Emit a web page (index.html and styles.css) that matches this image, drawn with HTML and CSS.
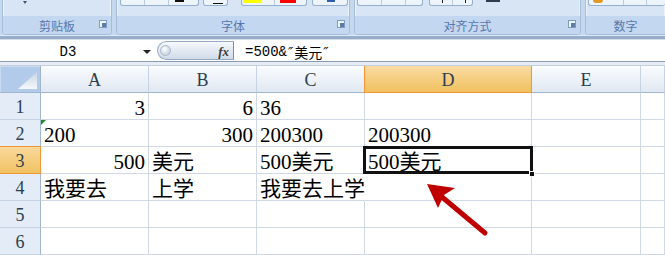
FILE: index.html
```html
<!DOCTYPE html>
<html lang="zh-CN">
<head>
  <meta charset="UTF-8" />
  <title>Excel - 连接符</title>
  <link rel="stylesheet" href="styles.css">
</head>
<body>
  <div class="ribbon">
    <div class="group g-clip">
      <div class="tools"><span class="paste-arrow"></span></div>
      <div class="label">剪贴板
        <svg class="launcher" width="8" height="8" viewBox="0 0 8 8"><rect x="0.5" y="0.5" width="7" height="7" fill="#eef4fb" stroke="#7f9cc3"/><rect x="3" y="3" width="4" height="4" fill="#5d7ba6"/></svg>
      </div>
    </div>
    <div class="group g-font">
      <div class="tools">
        <div class="btn b-bold"><span class="seg w23"></span><span class="seg w24"></span><span class="seg grow"><i class="mark m-dark"></i></span></div>
        <div class="btn b-line"><span class="seg grow"><i class="mark m-under"></i></span></div>
        <div class="btn b-color"><span class="seg w32"><i class="mark m-yellow"></i></span><span class="seg grow"><i class="mark m-red"></i></span></div>
        <div class="btn b-wen"><span class="seg grow"><i class="mark m-blue"></i></span></div>
      </div>
      <div class="label">字体
        <svg class="launcher" width="8" height="8" viewBox="0 0 8 8"><rect x="0.5" y="0.5" width="7" height="7" fill="#eef4fb" stroke="#7f9cc3"/><rect x="3" y="3" width="4" height="4" fill="#5d7ba6"/></svg>
      </div>
    </div>
    <div class="group g-align">
      <div class="tools">
        <div class="btn b-valign"><span class="seg w23"></span><span class="seg w24"></span><span class="seg grow"></span></div>
        <div class="btn b-indent"><span class="seg w22"><i class="mark m-tick"></i></span><span class="seg grow"><i class="mark m-tick"></i></span></div>
        <i class="wrap-mark"></i>
      </div>
      <div class="label">对齐方式
        <svg class="launcher" width="8" height="8" viewBox="0 0 8 8"><rect x="0.5" y="0.5" width="7" height="7" fill="#eef4fb" stroke="#7f9cc3"/><rect x="3" y="3" width="4" height="4" fill="#5d7ba6"/></svg>
      </div>
    </div>
    <div class="group g-num">
      <div class="tools">
        <div class="btn b-num"><span class="seg w34"><i class="mark m-orange"></i></span><span class="seg w23"></span><span class="seg grow"></span></div>
      </div>
      <div class="label">数字</div>
    </div>
  </div>
  <div class="ribbon-edge"></div>

  <div class="formula-bar">
    <div class="name-box"><span class="ref">D3</span><span class="drop"></span></div>
    <div class="fx-box"><span class="grip"></span><span class="fx">fx</span></div>
    <div class="formula">=500&amp;<span class="q">″</span>美元<span class="q">″</span></div>
  </div>
  <div class="sheet-gap"></div>

  <div class="sheet">
    <div class="corner"><span class="tri"></span></div>
    <div class="ch">A</div>
    <div class="ch">B</div>
    <div class="ch">C</div>
    <div class="ch sel">D</div>
    <div class="ch">E</div>
    <div class="ch"></div>

    <div class="rh">1</div>
    <div class="c r">3</div>
    <div class="c r">6</div>
    <div class="c">36</div>
    <div class="c"></div>
    <div class="c"></div>
    <div class="c"></div>

    <div class="rh">2</div>
    <div class="c flag">200</div>
    <div class="c r">300</div>
    <div class="c">200300</div>
    <div class="c">200300</div>
    <div class="c"></div>
    <div class="c"></div>

    <div class="rh sel">3</div>
    <div class="c r">500</div>
    <div class="c">美元</div>
    <div class="c">500美元</div>
    <div class="c active">500美元<span class="handle"></span></div>
    <div class="c"></div>
    <div class="c"></div>

    <div class="rh">4</div>
    <div class="c">我要去</div>
    <div class="c">上学</div>
    <div class="c spill">我要去上学</div>
    <div class="c"></div>
    <div class="c"></div>
    <div class="c"></div>

    <div class="rh">5</div>
    <div class="c"></div>
    <div class="c"></div>
    <div class="c"></div>
    <div class="c"></div>
    <div class="c"></div>
    <div class="c"></div>

    <div class="rh">6</div>
    <div class="c"></div>
    <div class="c"></div>
    <div class="c"></div>
    <div class="c"></div>
    <div class="c"></div>
    <div class="c"></div>
  </div>

  <!-- annotation arrow pointing at D3 -->
  <svg class="arrow" width="665" height="255" viewBox="0 0 665 255">
    <line x1="485" y1="233" x2="442" y2="197" stroke="#c00000" stroke-width="5" stroke-linecap="round"/>
    <polygon points="427,184 455,188 444,195 438,208" fill="#c00000"/>
  </svg>
</body>
</html>
```

FILE: styles.css
```css
* {
  box-sizing: border-box;
}

body {
  margin: 0;
  width: 665px;
  height: 255px;
  overflow: hidden;
  position: relative;
  background: #fff;
  font-family: "Liberation Serif", "Noto Sans CJK SC", serif;
}

/* ribbon */
.ribbon {
  display: flex;
  gap: 4px;
  height: 35px;
  padding-left: 2px;
  background: #c5d8ee;
}

.group {
  display: flex;
  flex-direction: column;
  height: 35px;
  border: 1px solid #a4bddb;
  border-top: none;
  border-radius: 0 0 4px 4px;
  background: #d8e5f4;
  overflow: hidden;
  box-shadow: inset 1px 0 0 #eaf2fb, inset -1px 0 0 #eaf2fb;
}

.g-clip { width: 110px; }
.g-font { width: 234px; }
.g-align { width: 227px; }
.g-num { flex: 1; border-right: none; border-radius: 0 0 0 4px; }

.tools {
  height: 17px;
  display: flex;
  align-items: flex-start;
}

.label {
  flex: 1;
  position: relative;
  display: flex;
  justify-content: center;
  align-items: center;
  padding-top: 1px;
  background: #c3d8f0;
  font: 12px "Noto Sans CJK SC", sans-serif;
  color: #5677ad;
}

.launcher {
  position: absolute;
  right: 4px;
  top: 4px;
}

.paste-arrow {
  margin: 1px 0 0 20px;
  border-left: 2.5px solid transparent;
  border-right: 2.5px solid transparent;
  border-top: 3px solid #3f5475;
}

.btn {
  display: flex;
  height: 6px;
  border: 1px solid #95afd1;
  border-top: none;
  border-radius: 0 0 3px 3px;
  background: #eef4fb;
  overflow: hidden;
}

.seg {
  display: flex;
  align-items: flex-start;
  height: 100%;
}

.seg + .seg { border-left: 1px solid #b9cce4; }
.seg.grow { flex: 1; }
.w22 { width: 22px; }
.w23 { width: 23px; }
.w24 { width: 24px; }
.w32 { width: 32px; }
.w34 { width: 34px; }

.mark { display: block; }
.m-dark { margin-left: 6px; width: 9px; height: 2px; background: #111; }
.m-under { margin: 3px 0 0 9px; width: 10px; height: 1px; background: #111; }
.m-yellow { margin-left: 1px; width: 19px; height: 3px; background: #ffff00; }
.m-red { margin-left: 5px; width: 16px; height: 3px; background: #ff0000; }
.m-blue { margin-left: 14px; width: 8px; height: 2px; background: #2f5fb0; }
.m-tick { margin-left: 12px; width: 1px; height: 3px; background: #222; }
.m-orange { margin-left: 4px; width: 10px; height: 3px; background: #e39a22; border-radius: 0 0 3px 3px; }

.b-bold { width: 79px; margin-left: 3px; }
.b-line { width: 25px; margin-left: 4px; }
.b-color { width: 66px; margin-left: 13px; }
.b-wen { width: 36px; margin-left: 5px; }
.b-valign { width: 66px; margin-left: 2px; }
.b-indent { width: 44px; margin-left: 6px; }
.b-num { flex: 1; margin-left: 2px; border-right: none; }

.wrap-mark {
  margin-left: 13px;
  width: 14px;
  height: 2px;
  background: #2e3b50;
}

.ribbon-edge {
  height: 5px;
  background: linear-gradient(#dcebf7 0 1px, #97adc9 1px 4px, #d3dde9 4px);
}

/* formula bar */
.formula-bar {
  display: flex;
  height: 22px;
  border-bottom: 1px solid #8b9db5;
  background: #fff;
}

.name-box {
  width: 155px;
  display: flex;
  align-items: center;
  font: 14px "Liberation Mono", monospace;
}

.ref {
  width: 136px;
  text-align: center;
  padding-top: 3px;
}

.drop {
  margin: 2px 0 0 7px;
  border-left: 4px solid transparent;
  border-right: 4px solid transparent;
  border-top: 4px solid #222;
}

.fx-box {
  width: 77px;
  margin: 1px 0 1px 2px;
  display: flex;
  align-items: center;
  justify-content: space-between;
  padding: 0 4px 0 2px;
  border: 1px solid #98abc6;
  border-right: 1px solid #7d8fa8;
  border-radius: 10px 0 0 10px;
  background: linear-gradient(#f6f8fc, #d0dbe9);
}

.grip {
  width: 11px;
  height: 11px;
  border-radius: 50%;
  background: radial-gradient(circle at 40% 35%, #ffffff, #b6c4d6);
  border: 1px solid #a9b8cc;
}

.fx {
  font: italic bold 13px "Liberation Serif", serif;
  color: #3c3c3c;
  padding-top: 2px;
}

.formula {
  display: flex;
  align-items: center;
  padding: 3px 0 0 11px;
  font: 14px "Liberation Mono", "Noto Sans CJK SC", monospace;
}

.formula .q {
  font-family: "DejaVu Sans", sans-serif;
  font-style: italic;
  margin: 0 1px;
}

.sheet-gap {
  height: 4px;
  background: #e6ecf4;
  border-bottom: 1px solid #c3d0e0;
}

/* sheet grid */
.sheet {
  display: grid;
  grid-template-columns: 41px 108px 108px 108px 167px 109px 1fr;
  grid-template-rows: 27px repeat(6, 27px);
}

.corner {
  display: flex;
  justify-content: flex-end;
  align-items: flex-end;
  padding: 0 3px 3px 0;
  background: #b3cbeb;
  border-right: 1px solid #9eb6ce;
  border-bottom: 1px solid #9eb6ce;
  box-shadow: inset 1px 1px 0 #c9daf1;
}

.tri {
  width: 19px;
  height: 17px;
  clip-path: polygon(100% 0, 100% 100%, 0 100%);
  background: linear-gradient(#c7d4e6, #f6f8fb);
}

.ch {
  display: flex;
  justify-content: center;
  align-items: center;
  padding-top: 3px;
  background: linear-gradient(#fafcfe, #e1e8f2);
  border-right: 1px solid #c6d3e4;
  border-bottom: 1px solid #9eb6ce;
  font-size: 18px;
  color: #2b3f52;
}

.ch.sel {
  background: linear-gradient(#f9dba3, #f1c15f);
  border-right-color: #f29536;
  border-bottom-color: #f29536;
  box-shadow: -1px 0 0 #f29536;
}

.rh {
  display: flex;
  justify-content: center;
  align-items: center;
  padding-top: 2px;
  background: #e4ecf7;
  border-right: 1px solid #9eb6ce;
  border-bottom: 1px solid #c5d3e3;
  font-size: 18px;
  color: #2b3f52;
}

.rh.sel {
  background: linear-gradient(#f9d99c, #f1c262);
  border-right-color: #f29536;
  border-bottom-color: #f29536;
  box-shadow: 0 -1px 0 #f29536;
}

.c {
  position: relative;
  display: flex;
  align-items: flex-end;
  padding: 0 3px;
  border-right: 1px solid #d0d7e5;
  border-bottom: 1px solid #d0d7e5;
  font-size: 21px;
  line-height: 22px;
  white-space: nowrap;
  color: #000;
}

.c.r { justify-content: flex-end; }
.c.spill { border-right-color: transparent; }

.c.flag::before {
  content: "";
  position: absolute;
  left: 0;
  top: 0;
  border-top: 5px solid #1d8a2c;
  border-right: 5px solid transparent;
}

.c.active::after {
  content: "";
  position: absolute;
  left: -2px;
  top: -1px;
  right: -2px;
  bottom: -1px;
  border: 3px solid #111;
}

.handle {
  position: absolute;
  right: -4px;
  bottom: -4px;
  width: 6px;
  height: 6px;
  background: #111;
  border: 1px solid #fff;
  z-index: 1;
}

.arrow {
  position: absolute;
  left: 0;
  top: 0;
  pointer-events: none;
}
```
